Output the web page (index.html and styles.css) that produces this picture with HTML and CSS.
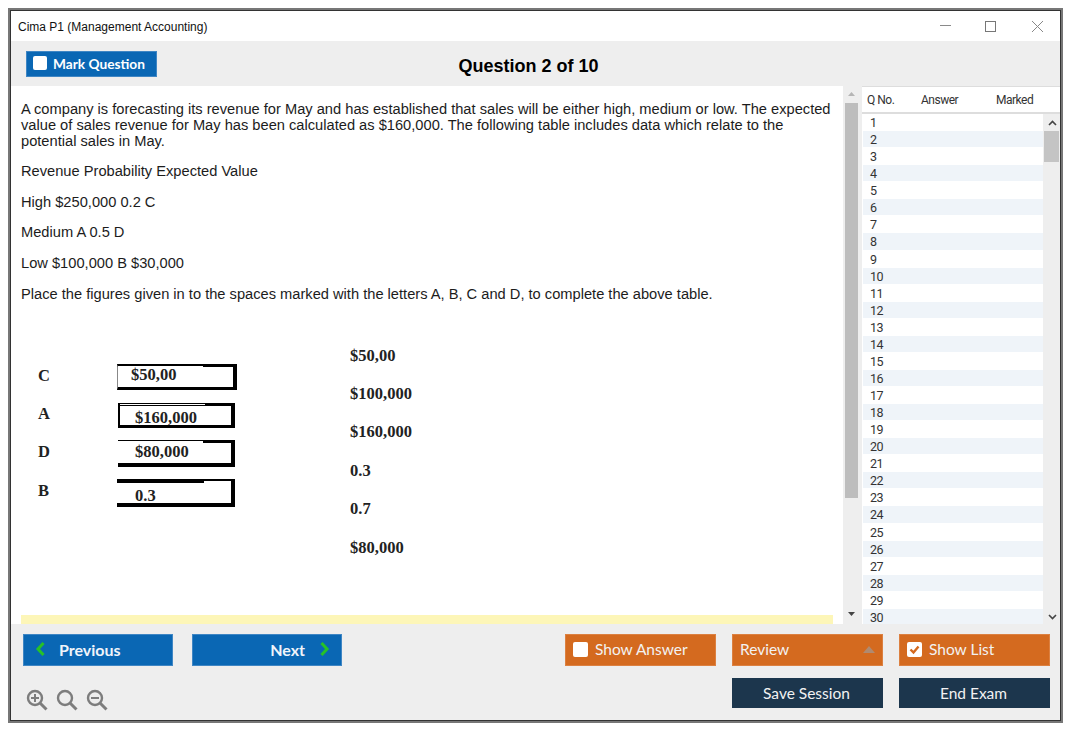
FILE: index.html
```html
<!DOCTYPE html>
<html lang="en">
<head>
<meta charset="utf-8">
<title>Cima P1 (Management Accounting)</title>
<link rel="stylesheet" href="styles.css">
</head>
<body>
<div class="window">
  <div class="window-inner">
    <header class="titlebar">
      <span class="title">Cima P1 (Management Accounting)</span>
      <div class="win-controls">
        <svg class="win-icon" width="46" height="30" viewBox="0 0 46 30"><path d="M18 14.500h11" stroke="#8a8a8a" fill="none"/></svg>
        <svg class="win-icon" width="46" height="30" viewBox="0 0 46 30"><rect x="17.500" y="10.500" width="10" height="10" stroke="#777" fill="none"/></svg>
        <svg class="win-icon" width="46" height="30" viewBox="0 0 46 30"><path d="M18 10l11 11M29 10L18 21" stroke="#888" fill="none"/></svg>
      </div>
    </header>
    <div class="toolbar">
      <button class="btn btn-blue btn-mark"><span class="check"></span>Mark Question</button>
      <h1 class="q-heading">Question 2 of 10</h1>
    </div>
    <main class="main">
      <section class="question">
        <div class="question-text">
          <p class="lead">A company is forecasting its revenue for May and has established that sales will be either high, medium or low. The expected value of sales revenue for May has been calculated as $160,000. The following table includes data which relate to the potential sales in May.</p>
          <p>Revenue Probability Expected Value</p>
          <p>High $250,000 0.2 C</p>
          <p>Medium A 0.5 D</p>
          <p>Low $100,000 B $30,000</p>
          <p>Place the figures given in to the spaces marked with the letters A, B, C and D, to complete the above table.</p>
          <div class="exhibit">
            <div class="letters">
              <span>C</span><span>A</span><span>D</span><span>B</span>
            </div>
            <div class="boxes">
              <div class="box box-1"><span>$50,00</span></div>
              <div class="box box-2"><span>$160,000</span></div>
              <div class="box box-3"><span>$80,000</span></div>
              <div class="box box-4"><span>0.3</span></div>
            </div>
            <div class="options">
              <span>$50,00</span><span>$100,000</span><span>$160,000</span><span>0.3</span><span>0.7</span><span>$80,000</span>
            </div>
          </div>
        </div>
        <div class="yellow-band"></div>
      </section>
      <div class="q-scroll">
        <svg class="arrow" width="7" height="4" viewBox="0 0 7 4"><path d="M0 4L3.5 0L7 4z" fill="#b5b5b5"/></svg>
        <div class="q-thumb"></div>
        <svg class="arrow arrow-down" width="7" height="4" viewBox="0 0 7 4"><path d="M0 0L3.5 4L7 0z" fill="#444"/></svg>
      </div>
      <aside class="list">
        <div class="list-head"><span class="h-no">Q No.</span><span class="h-ans">Answer</span><span class="h-mark">Marked</span></div>
        <div class="list-body">
          <div class="rows"><div class="row">1</div><div class="row">2</div><div class="row">3</div><div class="row">4</div><div class="row">5</div><div class="row">6</div><div class="row">7</div><div class="row">8</div><div class="row">9</div><div class="row">10</div><div class="row">11</div><div class="row">12</div><div class="row">13</div><div class="row">14</div><div class="row">15</div><div class="row">16</div><div class="row">17</div><div class="row">18</div><div class="row">19</div><div class="row">20</div><div class="row">21</div><div class="row">22</div><div class="row">23</div><div class="row">24</div><div class="row">25</div><div class="row">26</div><div class="row">27</div><div class="row">28</div><div class="row">29</div><div class="row">30</div></div>
          <div class="list-scroll">
            <svg class="chev" width="9" height="6" viewBox="0 0 9 6"><path d="M1 5l3.5-3.5L8 5" stroke="#444" stroke-width="1.6" fill="none"/></svg>
            <div class="list-thumb"></div>
            <svg class="chev chev-down" width="9" height="6" viewBox="0 0 9 6"><path d="M1 1l3.5 3.5L8 1" stroke="#444" stroke-width="1.6" fill="none"/></svg>
          </div>
        </div>
      </aside>
    </main>
    <footer class="bottom">
      <div class="bottom-left">
        <div class="nav">
          <button class="btn btn-blue btn-nav btn-prev">
            <svg width="11" height="16" viewBox="0 0 11 16"><path d="M8.500 2L3 8l5.500 6" stroke="#27c227" stroke-width="3" fill="none"/></svg>
            Previous
          </button>
          <button class="btn btn-blue btn-nav btn-next">
            Next
            <svg width="11" height="16" viewBox="0 0 11 16"><path d="M2.500 2L8 8l-5.500 6" stroke="#27c227" stroke-width="3" fill="none"/></svg>
          </button>
        </div>
        <div class="zooms">
          <svg width="22" height="22" viewBox="0 0 22 22"><circle cx="9" cy="9" r="7" stroke="#7d7d7d" stroke-width="2.400" fill="none"/><path d="M14 14l6.500 6.500" stroke="#7d7d7d" stroke-width="3" fill="none"/><path d="M5 9h8M9 5v8" stroke="#7d7d7d" stroke-width="2" fill="none"/></svg>
          <svg width="22" height="22" viewBox="0 0 22 22"><circle cx="9" cy="9" r="7" stroke="#7d7d7d" stroke-width="2.400" fill="none"/><path d="M14 14l6.500 6.500" stroke="#7d7d7d" stroke-width="3" fill="none"/></svg>
          <svg width="22" height="22" viewBox="0 0 22 22"><circle cx="9" cy="9" r="7" stroke="#7d7d7d" stroke-width="2.400" fill="none"/><path d="M14 14l6.500 6.500" stroke="#7d7d7d" stroke-width="3" fill="none"/><path d="M5 9h8" stroke="#7d7d7d" stroke-width="2" fill="none"/></svg>
        </div>
      </div>
      <div class="actions">
        <button class="btn btn-orange"><span class="check check-lg"></span>Show Answer</button>
        <button class="btn btn-orange btn-review">Review<svg width="12" height="7" viewBox="0 0 12 7"><path d="M0 7L6 0l6 7z" fill="#b08a70"/></svg></button>
        <button class="btn btn-orange"><span class="check check-lg"><svg width="13" height="13" viewBox="0 0 13 13"><path d="M2.500 6.500l3 3 5-6" stroke="#d46a1f" stroke-width="2.400" fill="none"/></svg></span>Show List</button>
        <span class="spacer"></span>
        <button class="btn btn-navy">Save Session</button>
        <button class="btn btn-navy">End Exam</button>
      </div>
    </footer>
  </div>
</div>
</body>
</html>
```
FILE: styles.css
```css
* { box-sizing: border-box; }
html, body { margin: 0; padding: 0; background: #fff; }
body { padding: 8px 0 0 8px; font-family: "Liberation Sans", Arial, sans-serif; color: #1a1a1a; }

.window { width: 1055px; height: 715px; border: 2px solid #777; }
.window-inner { width: 100%; height: 100%; border: 1px solid #333; display: flex; flex-direction: column; background: #eee; }

.titlebar { height: 30px; flex: none; background: #fff; display: flex; align-items: center; justify-content: space-between; padding-left: 7px; }
.title { font-size: 12px; color: #111; position: relative; top: 1px; }
.win-controls { display: flex; }
.win-icon { display: block; }

.toolbar { height: 45px; flex: none; background: #eee; padding: 10px 0 0 15px; display: flex; position: relative; }
.q-heading { margin: 0; position: absolute; left: 0; right: 0; top: 14px; text-align: center; font-size: 18px; line-height: 22px; font-weight: 700; color: #000; pointer-events: none; padding-right: 14px; }

.btn { border: 1px solid transparent; margin: 0; padding: 0; font-family: Lato, "Open Sans", sans-serif; font-size: 15.500px; color: #f2f2f2; display: flex; align-items: center; cursor: default; }
.btn-blue { background: #0a67b4; border-color: #3f86c4; font-weight: 700; }
.btn-orange { background: #d46a1f; border-color: #dc8040; width: 151px; height: 32px; padding: 0 0 2px 7px; }
.btn-navy { background: #1c364d; border-color: #1c364d; width: 151px; height: 30px; justify-content: center; padding-right: 2px; }

.btn-mark { width: 131px; height: 26px; padding: 0 0 2px 6px; font-size: 13.700px; color: #fff; }
.check { width: 14px; height: 14px; background: #fff; border-radius: 2px; margin-right: 6px; flex: none; display: flex; align-items: center; justify-content: center; }
.check-lg { width: 15px; height: 15px; margin-right: 7px; }

.main { height: 538px; flex: none; display: flex; background: #fff; }
.question { width: 832px; flex: none; display: flex; flex-direction: column; padding-left: 10px; }
.question-text { flex: 1; min-height: 0; padding: 15px 10px 0 0; font-size: 14.670px; line-height: 16px; color: #1c1c1c; }
.question-text p { margin: 0 0 14.670px; }
.question-text p.lead { margin-bottom: 14px; }
.yellow-band { height: 9px; width: 812px; background: #fdf6b8; flex: none; }

.exhibit { display: flex; margin-top: 45px; font-family: "Liberation Serif", serif; font-weight: 700; font-size: 16.500px; line-height: 20px; color: #222; }
.letters { width: 96px; padding: 19px 0 0 17px; display: flex; flex-direction: column; gap: 18.400px; }
.boxes { width: 233px; padding-top: 17px; }
.options { display: flex; flex-direction: column; gap: 18.400px; margin-top: -1px; }

.box { position: relative; background: #fff; border-style: solid; border-color: #000; }
.box span { position: relative; z-index: 1; display: block; }
.box::before { content: ""; position: absolute; background: #fff; }
.box-1 { width: 120px; height: 26px; border-width: 3px 4px 3px 1px; border-left-color: #888; }
.box-1::before { left: 0; top: -1px; width: 85px; height: 2px; }
.box-1 span { margin: -2px 0 0 13px; }
.box-2 { width: 117px; height: 25px; margin: 13px 0 0 1px; border-width: 3px 4px 3px 2px; }
.box-2::before { left: 0; top: -2px; width: 85px; height: 1px; }
.box-2 span { margin: 2px 0 0 15px; }
.box-3 { width: 117px; height: 27px; margin: 12px 0 0 1px; border-width: 3px 4px 4px 0; }
.box-3::before { left: 0; top: -2px; width: 85px; height: 2px; }
.box-3 span { margin: -1px 0 0 17px; }
.box-4 { width: 118px; height: 28px; margin: 12px 0 0 0; border-width: 4px 4px 4px 0; }
.box-4::before { left: 87px; top: -2px; width: 27px; height: 2px; }
.box-4 span { margin: 3px 0 0 18px; }

.q-scroll { width: 19px; flex: none; background: #eee; display: flex; flex-direction: column; align-items: center; padding: 6px 0 5px; position: relative; }
.arrow { display: block; flex: none; margin-left: -3px; }
.q-thumb { width: 13px; height: 395px; background: #bdbdbd; margin: 7px 0 0 -2px; flex: none; }
.arrow-down { margin-top: auto; margin-bottom: 3px; }

.list { flex: 1; min-width: 0; display: flex; flex-direction: column; background: #fff; border-top: 1px solid #ddd; }
.list-head { height: 27px; flex: none; border-bottom: 2px solid #ddd; display: flex; align-items: center; font-family: Roboto, sans-serif; font-size: 12px; letter-spacing: -0.500px; color: #333; }
.h-no { margin-left: 5px; width: 54px; }
.h-ans { width: 75px; }
.list-body { flex: 1; min-height: 0; display: flex; }
.rows { width: 181px; flex: none; overflow: hidden; padding-left: 1px; }
.row { height: 17.070px; padding-left: 7px; font-family: Roboto, sans-serif; font-size: 12.500px; letter-spacing: -0.500px; line-height: 18px; color: #333; border-bottom: 1px solid #fff; }
.row:nth-child(even) { background: #eff4f9; }
.list-scroll { flex: 1; background: #eee; display: flex; flex-direction: column; align-items: center; padding-top: 6px; }
.chev { display: block; flex: none; margin-left: 1px; }
.list-thumb { width: 15px; height: 31px; background: #c4c4c4; margin: 5px 1px 0 0; flex: none; }
.chev-down { margin-top: auto; margin-bottom: 4px; }

.bottom { flex: 1; min-height: 0; background: #eee; display: flex; justify-content: space-between; padding: 10px 10px 0 12px; margin-top: 0; }
.bottom-left { display: flex; flex-direction: column; }
.nav { display: flex; gap: 19px; }
.btn-nav { width: 150px; height: 32px; padding-bottom: 2px; font-size: 16px; color: #f0f4fa; }
.btn-prev { padding-left: 11px; gap: 13px; }
.btn-next { justify-content: flex-end; padding-right: 11px; gap: 14px; }
.zooms { display: flex; gap: 8px; margin: 23px 0 0 3px; }
.zooms svg { display: block; }

.actions { display: grid; grid-template-columns: 151px 151px 151px; grid-template-rows: 32px 30px; column-gap: 16px; row-gap: 12px; }
.btn-review { justify-content: space-between; padding-right: 7px; }
.spacer { display: block; }
```
